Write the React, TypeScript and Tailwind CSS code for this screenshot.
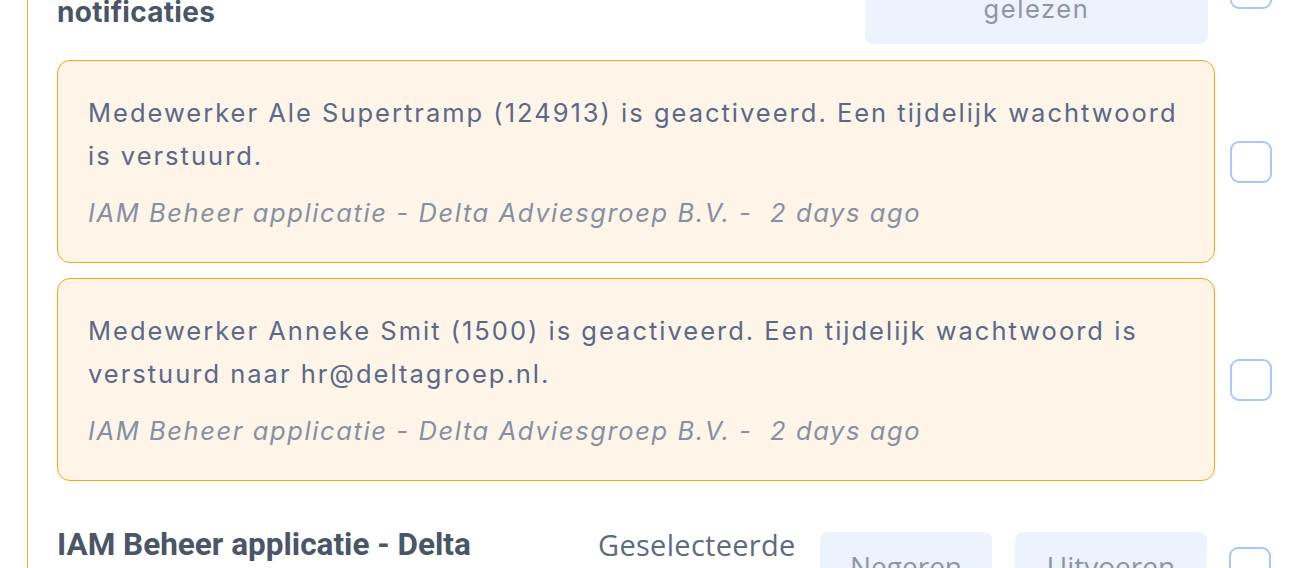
import React from "react";

interface Notification {
  id: number;
  message: string;
  source: string;
  age: string;
}

const notifications: Notification[] = [
  {
    id: 1,
    message:
      "Medewerker Ale Supertramp (124913) is geactiveerd. Een tijdelijk wachtwoord is verstuurd.",
    source: "IAM Beheer applicatie - Delta Adviesgroep B.V. -",
    age: "2 days ago",
  },
  {
    id: 2,
    message:
      "Medewerker Anneke Smit (1500) is geactiveerd. Een tijdelijk wachtwoord is verstuurd naar hr@deltagroep.nl.",
    source: "IAM Beheer applicatie - Delta Adviesgroep B.V. -",
    age: "2 days ago",
  },
];

const Checkbox = () => (
  <div className="h-[42px] w-[42px] shrink-0 rounded-[9px] border-2 border-[#a6c8fc] bg-white" />
);

export default function App() {
  return (
    <div
      className="h-[568px] w-full overflow-hidden bg-white"
      style={{ fontFamily: 'Inter, "Open Sans", sans-serif' }}
    >
      <div className="ml-[27px] mr-[30px] flex h-full flex-col border-l border-[#f2a83a] pl-[29px]">
        {/* header row, scrolled partly out of view */}
        <div className="-mt-[60px] flex items-center">
          <h2 className="flex-1 text-[28px] font-bold leading-[40px] tracking-[0.3px] text-[#4a5567]">
            Ongelezen
            <br />
            notificaties
          </h2>
          <button className="h-[104px] w-[343px] rounded-lg bg-[#edf3fc] pb-[6px] text-[25.5px] leading-[40px] tracking-[1.6px] text-[#8c96a2]">
            Markeer als
            <br />
            gelezen
          </button>
          <div className="ml-[22px] -mt-[8px]">
            <Checkbox />
          </div>
        </div>

        {/* notification cards */}
        <div className="mt-[16px] flex flex-col gap-[15px]">
          {notifications.map((n) => (
            <div key={n.id} className="flex items-center gap-[15px]">
              <div className="flex-1 rounded-[13px] border border-[#f5a417] bg-[#fef5e8] px-[30px] pt-[30px] pb-[28px]">
                <p className="text-[25.5px] leading-[43px] tracking-[2px] text-[#59698a]">
                  {n.message}
                </p>
                <p className="mt-[14px] text-[25.5px] italic leading-[43px] tracking-[1.6px] text-[#8591a3]">
                  {n.source}&nbsp; {n.age}
                </p>
              </div>
              <Checkbox />
            </div>
          ))}
        </div>

        {/* bulk actions row */}
        <div className="mt-[43px] flex items-start">
          <h3 className="w-[520px] font-['Roboto'] text-[31.5px] font-bold leading-[42px] text-[#4a5567]">
            IAM Beheer applicatie - Delta Adviesgroep B.V.
          </h3>
          <p className="ml-[21px] w-[210px] font-['Open_Sans'] text-[29px] leading-[42px] tracking-[0.3px] text-[#5e6b80]">
            Geselecteerde acties:
          </p>
          <button className="ml-[12px] mt-[8px] h-[72px] w-[172px] rounded-lg bg-[#edf3fc] pb-[4px] font-['Open_Sans'] text-[28px] text-[#8c96a2]">
            Negeren
          </button>
          <button className="ml-[23px] mt-[8px] h-[72px] w-[192px] rounded-lg bg-[#edf3fc] pb-[4px] font-['Open_Sans'] text-[28px] text-[#8c96a2]">
            Uitvoeren
          </button>
          <div className="ml-[22px] mt-[23px]">
            <Checkbox />
          </div>
        </div>
      </div>
    </div>
  );
}
